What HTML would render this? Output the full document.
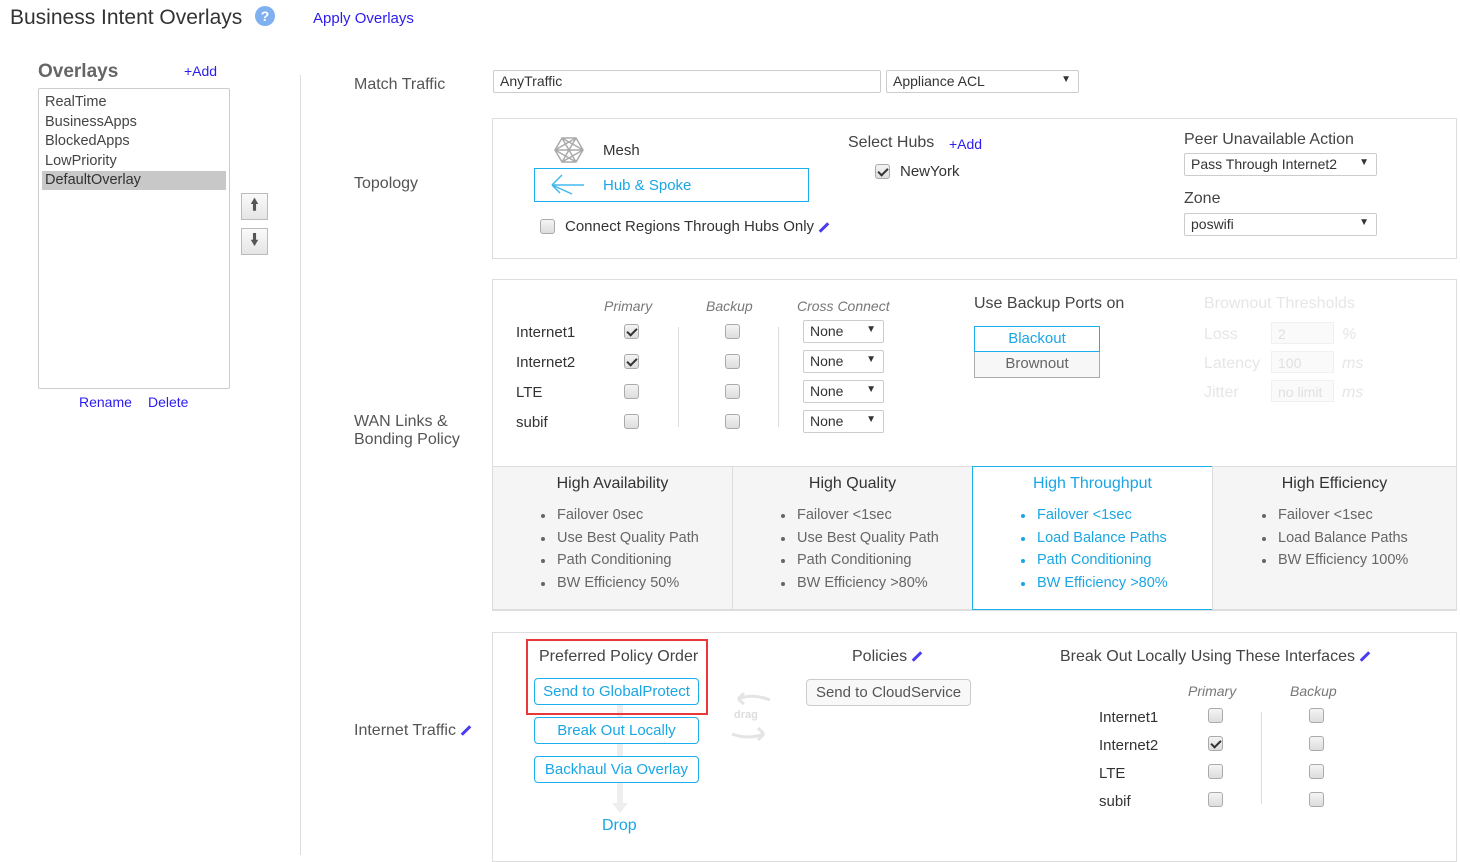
<!DOCTYPE html>
<html><head><meta charset="utf-8"><style>
*{box-sizing:border-box;margin:0;padding:0}
body{width:1460px;height:855px;position:relative;background:#fff;font-family:"Liberation Sans",sans-serif;font-size:14px;color:#333;overflow:hidden}
.a{position:absolute;white-space:nowrap}
.lbl{color:#555;font-size:16px}
.blue{color:#1aa6e4}
.lnk{color:#2b1cf0}
.cb{position:absolute;width:15px;height:15px;border:1px solid #aaa;border-radius:3px;background:linear-gradient(#f4f4f4,#ddd)}
.cb.on::after{content:"";position:absolute;left:4px;top:1px;width:4px;height:8px;border:solid #333;border-width:0 2px 2px 0;transform:rotate(45deg)}
.sel{position:absolute;border:1px solid #ccc;border-radius:2px;height:23px;padding:2px 6px;font-size:14px;color:#333;background:#fff}
.sel.dd::after{content:"▼";position:absolute;right:7px;top:3px;font-size:10px}
.box{position:absolute;border:1px solid #ddd}
.pill{position:absolute;border:1px solid #1ab0ec;border-radius:4px;color:#1aa6e4;text-align:center;font-size:15px;height:27px;line-height:25px}
.pen{display:inline-block;width:12px;height:3px;background:#4a3cf0;transform:rotate(-45deg);margin-left:4px;vertical-align:middle}
ul{list-style:none}
li{position:relative;padding-left:24px;line-height:22.5px;font-size:14.5px;color:#666}
li::before{content:"";position:absolute;left:8px;top:10px;width:4px;height:4px;border-radius:50%;background:#666}
.hb li,.hb li::before{color:#1aa6e4}
.hb li::before{background:#1aa6e4}
.col{position:absolute;top:466px;height:144px;background:#f5f5f5;border:1px solid #ddd}
.col h4{font-weight:normal;font-size:16px;text-align:center;margin-top:8px;margin-bottom:11px;color:#333}
.btn{position:absolute;width:27px;height:27px;border:1px solid #bbb;background:linear-gradient(#fafafa,#e5e5e5);text-align:center;line-height:24px;font-weight:bold;font-size:16px;color:#555}
</style></head><body>
<div class="a" style="left:10px;top:6px;font-size:21px;color:#333">Business Intent Overlays</div>
<div class="a" style="left:255px;top:6px;width:20px;height:20px;border-radius:50%;background:#7fb0f0;color:#fff;text-align:center;font-weight:bold;line-height:20px;font-size:14px">?</div>
<div class="a lnk" style="left:313px;top:10px;font-size:15px">Apply Overlays</div>

<div class="a" style="left:38px;top:61px;font-size:19px;font-weight:bold;color:#666">Overlays</div>
<div class="a lnk" style="left:184px;top:63px">+Add</div>
<div class="box" style="left:38px;top:88px;width:192px;height:301px;border-color:#ccc;border-radius:2px">
<div style="padding:4px 0 0 6px;line-height:19.5px;color:#444;font-size:14.5px">RealTime<br>BusinessApps<br>BlockedApps<br>LowPriority</div>
<div style="margin:0 3px 0 3px;background:#c8c8c8;padding-left:3px;line-height:19px;font-size:14.5px;color:#333">DefaultOverlay</div>
</div>
<div class="btn" style="left:241px;top:193px">&#129049;</div>
<div class="btn" style="left:241px;top:228px">&#129051;</div>
<div class="a lnk" style="left:79px;top:394px">Rename</div>
<div class="a lnk" style="left:148px;top:394px">Delete</div>

<div class="a" style="left:300px;top:75px;width:1px;height:780px;background:#ddd"></div>

<div class="a lbl" style="left:354px;top:76px">Match Traffic</div>
<div class="a lbl" style="left:354px;top:175px">Topology</div>
<div class="a lbl" style="left:354px;top:413px;line-height:18px">WAN Links &amp;<br>Bonding Policy</div>
<div class="a lbl" style="left:354px;top:722px">Internet Traffic<span class="pen"></span></div>

<div class="sel" style="left:493px;top:70px;width:388px">AnyTraffic</div>
<div class="sel dd" style="left:886px;top:70px;width:193px">Appliance ACL</div>

<div class="box" style="left:492px;top:118px;width:965px;height:141px"></div>
<svg class="a" style="left:554px;top:137px" width="30" height="26" viewBox="0 0 30 26"><g fill="none" stroke="#aaa" stroke-width="1.5"><polygon points="8,1 22,1 29,13 22,25 8,25 1,13"/><path d="M8 1L22 25M22 1L8 25M1 13H29M8 1L29 13M22 1L1 13M8 25L29 13M22 25L1 13"/></g></svg>
<div class="a" style="left:603px;top:142px;font-size:15px">Mesh</div>
<div class="a" style="left:534px;top:168px;width:275px;height:34px;border:1px solid #1ab0ec"></div>
<svg class="a" style="left:550px;top:172px" width="36" height="26" viewBox="0 0 36 26"><g stroke="#40b8ee" stroke-width="1.5" fill="none"><path d="M2 13H34M2 13L12 3M2 13L10 21M2 13L22 22"/></g></svg>
<div class="a blue" style="left:603px;top:177px;font-size:15px">Hub &amp; Spoke</div>
<div class="cb" style="left:540px;top:219px"></div>
<div class="a" style="left:565px;top:218px;font-size:15px">Connect Regions Through Hubs Only<span class="pen"></span></div>
<div class="a" style="left:848px;top:134px;font-size:16px;color:#444">Select Hubs</div>
<div class="a lnk" style="left:949px;top:136px">+Add</div>
<div class="cb on" style="left:875px;top:164px"></div>
<div class="a" style="left:900px;top:163px;font-size:15px">NewYork</div>
<div class="a" style="left:1184px;top:131px;font-size:16px;color:#444">Peer Unavailable Action</div>
<div class="sel dd" style="left:1184px;top:153px;width:193px">Pass Through Internet2</div>
<div class="a" style="left:1184px;top:190px;font-size:16px;color:#444">Zone</div>
<div class="sel dd" style="left:1184px;top:213px;width:193px">poswifi</div>

<div class="box" style="left:492px;top:279px;width:965px;height:332px"></div>
<div class="a" style="left:604px;top:298px;font-style:italic;color:#777">Primary</div>
<div class="a" style="left:706px;top:298px;font-style:italic;color:#777">Backup</div>
<div class="a" style="left:797px;top:298px;font-style:italic;color:#777">Cross Connect</div>
<div class="a" style="left:678px;top:327px;width:1px;height:100px;background:#ddd"></div>
<div class="a" style="left:778px;top:327px;width:1px;height:100px;background:#ddd"></div>
<div class="a" style="left:516px;top:318px;font-size:15px;line-height:30px">Internet1<br>Internet2<br>LTE<br>subif</div>
<div class="cb on" style="left:624px;top:324px"></div><div class="cb" style="left:725px;top:324px"></div><div class="sel dd" style="left:803px;top:320px;width:81px">None</div>
<div class="cb on" style="left:624px;top:354px"></div><div class="cb" style="left:725px;top:354px"></div><div class="sel dd" style="left:803px;top:350px;width:81px">None</div>
<div class="cb" style="left:624px;top:384px"></div><div class="cb" style="left:725px;top:384px"></div><div class="sel dd" style="left:803px;top:380px;width:81px">None</div>
<div class="cb" style="left:624px;top:414px"></div><div class="cb" style="left:725px;top:414px"></div><div class="sel dd" style="left:803px;top:410px;width:81px">None</div>
<div class="a" style="left:974px;top:295px;font-size:16px;color:#444">Use Backup Ports on</div>
<div class="a blue" style="left:974px;top:326px;width:126px;height:26px;border:1px solid #1ab0ec;text-align:center;line-height:24px;font-size:15px">Blackout</div>
<div class="a" style="left:974px;top:352px;width:126px;height:26px;border:1px solid #aaa;border-top:none;background:#f7f7f7;text-align:center;line-height:24px;font-size:15px;color:#666">Brownout</div>
<div class="a" style="left:1204px;top:295px;font-size:16px;color:#e6e6e6">Brownout Thresholds</div>
<div class="a" style="left:1204px;top:320px;font-size:16px;color:#e6e6e6;line-height:29px">Loss<br>Latency<br>Jitter</div>
<div class="a" style="left:1271px;top:322px;width:63px;height:22px;border:1px solid #f0f0f0;background:#fafafa;color:#e0e0e0;padding:3px 6px">2</div>
<div class="a" style="left:1271px;top:351px;width:63px;height:22px;border:1px solid #f0f0f0;background:#fafafa;color:#e0e0e0;padding:3px 6px">100</div>
<div class="a" style="left:1271px;top:380px;width:63px;height:22px;border:1px solid #f0f0f0;background:#fafafa;color:#e0e0e0;padding:3px 6px">no limit</div>
<div class="a" style="left:1342px;top:320px;font-size:16px;color:#e6e6e6;font-style:italic;line-height:29px">%<br>ms<br>ms</div>

<div class="col" style="left:492px;width:241px"><h4>High Availability</h4><ul style="margin-left:40px"><li>Failover 0sec</li><li>Use Best Quality Path</li><li>Path Conditioning</li><li>BW Efficiency 50%</li></ul></div>
<div class="col" style="left:732px;width:241px"><h4>High Quality</h4><ul style="margin-left:40px"><li>Failover &lt;1sec</li><li>Use Best Quality Path</li><li>Path Conditioning</li><li>BW Efficiency &gt;80%</li></ul></div>
<div class="col hb" style="left:972px;width:241px;background:#fff;border-color:#1ab0ec"><h4 style="color:#1aa6e4">High Throughput</h4><ul style="margin-left:40px"><li>Failover &lt;1sec</li><li>Load Balance Paths</li><li>Path Conditioning</li><li>BW Efficiency &gt;80%</li></ul></div>
<div class="col" style="left:1212px;width:245px"><h4>High Efficiency</h4><ul style="margin-left:41px"><li>Failover &lt;1sec</li><li>Load Balance Paths</li><li>BW Efficiency 100%</li></ul></div>

<div class="box" style="left:492px;top:632px;width:965px;height:230px"></div>
<div class="a" style="left:617px;top:700px;width:6px;height:105px;background:#eee"></div>
<div class="a" style="left:612px;top:803px;border:8px solid transparent;border-top:10px solid #eee;border-bottom:none"></div>
<div class="a" style="left:526px;top:639px;width:182px;height:76px;border:2px solid #e8383d"></div>
<div class="a" style="left:539px;top:648px;font-size:16px;color:#444">Preferred Policy Order</div>
<div class="pill" style="left:534px;top:678px;width:165px;background:#fff">Send to GlobalProtect</div>
<div class="pill" style="left:534px;top:717px;width:165px;background:#fff">Break Out Locally</div>
<div class="pill" style="left:534px;top:756px;width:165px;background:#fff">Backhaul Via Overlay</div>
<div class="a blue" style="left:602px;top:817px;font-size:16px">Drop</div>
<div class="a" style="left:734px;top:709px;font-size:11px;color:#ddd;font-weight:bold">drag</div>
<svg class="a" style="left:728px;top:690px" width="46" height="56" viewBox="0 0 46 56"><g fill="none" stroke="#e4e4e4" stroke-width="3"><path d="M42 10Q25 3 10 9M10 9L16 3M10 9L16 14"/><path d="M4 44Q20 50 36 44M36 44L30 38M36 44L30 50"/></g></svg>
<div class="a" style="left:852px;top:648px;font-size:16px;color:#444">Policies<span class="pen"></span></div>
<div class="a" style="left:806px;top:679px;width:165px;height:27px;border:1px solid #ccc;border-radius:4px;background:#f8f8f8;text-align:center;line-height:25px;font-size:15px;color:#555">Send to CloudService</div>
<div class="a" style="left:1060px;top:648px;font-size:16px;color:#444">Break Out Locally Using These Interfaces<span class="pen"></span></div>
<div class="a" style="left:1188px;top:683px;font-style:italic;color:#777">Primary</div>
<div class="a" style="left:1290px;top:683px;font-style:italic;color:#777">Backup</div>
<div class="a" style="left:1261px;top:712px;width:1px;height:92px;background:#ddd"></div>
<div class="a" style="left:1099px;top:704px;font-size:15px;line-height:28px">Internet1<br>Internet2<br>LTE<br>subif</div>
<div class="cb" style="left:1208px;top:708px"></div><div class="cb" style="left:1309px;top:708px"></div>
<div class="cb on" style="left:1208px;top:736px"></div><div class="cb" style="left:1309px;top:736px"></div>
<div class="cb" style="left:1208px;top:764px"></div><div class="cb" style="left:1309px;top:764px"></div>
<div class="cb" style="left:1208px;top:792px"></div><div class="cb" style="left:1309px;top:792px"></div>
</body></html>
